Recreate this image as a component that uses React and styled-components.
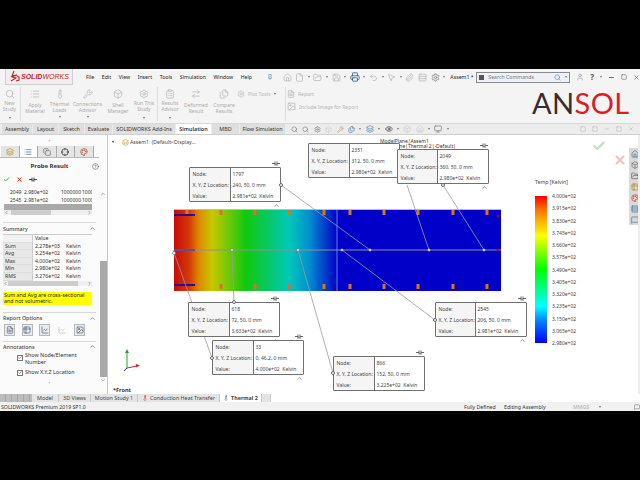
import React from 'react';
import styled, { createGlobalStyle } from 'styled-components';
import {
  Search, List, Thermometer, Wrench, Box, Settings, ClipboardList, ArrowRightLeft, Files, Image, FileText,
  Home, File, FolderOpen, Save, Printer, Undo2, MousePointer2, Paperclip, Rows3, User, Minus, Square, X,
  ChevronUp, ChevronDown, ChevronLeft, ChevronRight, Check, Pin, Eye, Monitor, HelpCircle, Crosshair, Table2, Palette,
  Layers, ChartLine, MessageSquare, Copy,
} from 'lucide-react';

const GlobalStyle = createGlobalStyle`
  html, body { margin: 0; padding: 0; background: #000; }
  * { box-sizing: border-box; }
`;

const Screen = styled.div`
  width: 640px;
  height: 480px;
  background: #000;
  padding: 69px 0;
  overflow: hidden;
  font-family: 'Noto Sans', sans-serif;
  color: #333;
`;

const Window = styled.div`
  display: flex;
  flex-direction: column;
  height: 342px;
  background: #fff;
`;

const TitleBar = styled.div`
  display: flex;
  align-items: center;
  height: 16px;
  background: #f4f4f4;
`;

const LogoBox = styled.div`
  display: flex;
  align-items: center;
  gap: 1px;
  width: 68px;
  height: 16px;
  margin-left: 5px;
  padding-left: 3px;
  background: #f0eeee;
  border: 1px solid #cfcfcf;
  border-top: 0;
  font-size: 7px;
  font-style: italic;
  color: #c8202a;
  white-space: nowrap;
`;

const Solid = styled.b`
  font-family: 'Liberation Sans', sans-serif;
  font-weight: 700;
`;

const Works = styled.span`
  font-family: 'Liberation Sans', sans-serif;
  font-weight: 400;
`;

const Menu = styled.div`
  display: flex;
  align-items: center;
  gap: 7.6px;
  margin-left: 13px;
  width: 197px;
  font-size: 5.2px;
  color: #222;
`;

const MenuPin = styled.span`
  display: flex;
  margin-left: 7px;
  color: #2a7a9a;
`;

const QuickBar = styled.div`
  display: flex;
  align-items: center;
  gap: 3.6px;
  width: 168px;
  color: #b5b5b5;
`;

const QuickIcon = styled.span`
  display: flex;
  color: ${(p) => p.$color || '#b8b8b8'};
`;

const Caret = styled.span`
  width: 0;
  height: 0;
  margin: 0 ${(p) => p.$gap ?? 0}px;
  border: 1.5px solid transparent;
  border-top: 2px solid ${(p) => p.$color || '#777'};
  border-bottom: 0;
`;

const DocName = styled.span`
  width: 26px;
  font-size: 5.2px;
  color: #222;
  white-space: nowrap;
`;

const SearchBox = styled.div`
  display: flex;
  align-items: center;
  gap: 4px;
  width: 94px;
  height: 11px;
  padding: 0 2px;
  background: #eef1f5;
  border: 1px solid #8b8b8b;
  font-size: 5.2px;
  color: #777;
`;

const SearchLabel = styled.span`
  flex: 1;
`;

const SearchGlyph = styled.span`
  width: 5px;
  height: 5px;
  background: #555;
`;

const WindowButtons = styled.div`
  display: flex;
  align-items: center;
  gap: 6px;
  margin-left: 6px;
  color: #555;
`;

const Help = styled.span`
  font-size: 8px;
  font-weight: 700;
  line-height: 1;
`;

const Ribbon = styled.div`
  display: flex;
  align-items: flex-start;
  height: 39px;
  background: #f4f4f4;
  border-bottom: 1px solid #d8d8d8;
`;

const RibbonItem = styled.div`
  display: flex;
  flex-direction: column;
  align-items: center;
  width: ${(p) => p.$w}px;
  padding-top: 4px;
  font-size: 5px;
  line-height: 6.4px;
  text-align: center;
  color: #ababab;
  white-space: pre-line;
`;

const RibbonGlyph = styled.span`
  display: flex;
  height: 11px;
  margin-bottom: ${(p) => p.$drop ?? 0}px;
  color: #bdbdbd;
`;

const RibbonCaret = styled(Caret)`
  margin-top: ${(p) => p.$lift}px;
`;

const RibbonSep = styled.span`
  align-self: stretch;
  width: 1px;
  margin: 2px 1px;
  background: #dcdcdc;
`;

const ReportColumn = styled.div`
  display: flex;
  flex-direction: column;
  gap: 4px;
  width: 72px;
  padding-top: 5px;
  font-size: 5px;
  color: #b4b4b4;
`;

const ReportRow = styled.div`
  display: flex;
  align-items: center;
  gap: 3px;
  white-space: nowrap;
`;

const PlotTools = styled(ReportRow)`
  width: 47px;
  padding: 5px 0 0 0;
  font-size: 5px;
  color: #b4b4b4;
`;

const Brand = styled.div`
  margin: 1px 0 0 173px;
  font-family: Lato, sans-serif;
  font-size: 29px;
  font-weight: 400;
  line-height: 33px;
  letter-spacing: 0.4px;
  color: #3a2b2e;
`;

const BrandRed = styled.span`
  color: #d81f26;
`;

const TabsBar = styled.div`
  display: flex;
  align-items: stretch;
  height: 11px;
  padding-left: 2px;
  background: #ececec;
  border-bottom: 1px solid #cfcfcf;
`;

const Tab = styled.div`
  display: flex;
  align-items: center;
  justify-content: center;
  width: ${(p) => p.$w}px;
  margin-right: 1px;
  background: ${(p) => (p.$active ? '#fff' : '#dfdfdf')};
  font-size: 5.4px;
  font-weight: ${(p) => (p.$active ? 600 : 400)};
  color: #333;
  white-space: nowrap;
`;

const ViewTools = styled.div`
  display: flex;
  align-items: center;
  gap: 4.4px;
  margin-left: 5px;
  width: 289px;
  color: #777;
`;

const ViewIcon = styled.span`
  display: flex;
  color: ${(p) => p.$color || '#8a8a8a'};
`;

const DocButtons = styled.div`
  display: flex;
  align-items: center;
  gap: 6px;
  color: #b5b5b5;
`;

const Main = styled.div`
  display: flex;
  height: 259px;
`;

const Panel = styled.div`
  display: flex;
  width: 108px;
  flex-shrink: 0;
  background: #fbfbfb;
  border-right: 1px solid #c8c8c8;
`;

const PanelBody = styled.div`
  width: 99px;
  display: flex;
  flex-direction: column;
`;

const Handle = styled.div`
  display: flex;
  align-items: center;
  justify-content: center;
  height: ${(p) => p.$h || 11}px;
  color: #bbb;
  font-size: 6px;
  line-height: 1;
`;

const PanelTabs = styled.div`
  display: flex;
  height: 12px;
  padding-left: 1px;
  border-bottom: 1px solid #bbb;
`;

const PanelTab = styled.div`
  display: flex;
  align-items: center;
  justify-content: center;
  width: 18.5px;
  background: ${(p) => (p.$active ? '#fff' : '#e4e4e4')};
  border-right: 1px solid #aaa;
`;

const PanelTitle = styled.div`
  display: flex;
  align-items: center;
  justify-content: center;
  position: relative;
  height: 16px;
  font-size: 6px;
  font-weight: 700;
  color: #333;
`;

const TitleHelp = styled.span`
  position: absolute;
  right: 0;
  display: flex;
  color: #666;
`;

const ActionRow = styled.div`
  display: flex;
  align-items: center;
  gap: 6px;
  height: 11px;
  padding-left: 3px;
`;

const ListBox = styled.div`
  margin: 4px 7px 0 4px;
  height: 26px;
  font-size: 5px;
  line-height: 7.5px;
  color: #333;
`;

const ListRow = styled.div`
  display: grid;
  grid-template-columns: 6px 51px 21px 1fr;
  white-space: nowrap;
  overflow: hidden;
`;

const ListSelected = styled.div`
  height: 6px;
  background: #a9a9a9;
`;

const HScroll = styled.div`
  display: flex;
  align-items: center;
  justify-content: space-between;
  height: 5px;
  background: #efefef;
  color: #444;
`;

const TableScroll = styled(HScroll)`
  margin: 0 7px 0 3px;
`;

const HThumb = styled.div`
  width: ${(p) => p.$w}px;
  height: 100%;
  margin-left: ${(p) => p.$left}px;
  margin-right: auto;
  background: #cdcdcd;
`;

const SectionHead = styled.div`
  display: flex;
  align-items: center;
  justify-content: space-between;
  height: ${(p) => p.$h || 12}px;
  margin: ${(p) => p.$top || 0}px 3px 0 3px;
  border-top: 1px solid #d8d8d8;
  font-size: 5.4px;
  font-weight: 500;
  color: #444;
`;

const DataTable = styled.div`
  margin: 0 7px 0 3px;
  display: grid;
  grid-template-columns: 30px 31px 1fr;
  grid-auto-rows: 7.6px;
  font-size: 5.2px;
  line-height: 7.6px;
  border-top: 1px solid #ccc;
`;

const HeadCell = styled.div`
  background: #f1f1f1;
  border-right: 1px solid #ccc;
  border-bottom: 1px solid #ddd;
  padding-left: 2px;
`;

const NameCell = styled(HeadCell)`
  background: #e8e8e8;
`;

const ValueCell = styled.div`
  padding-left: 2px;
  white-space: nowrap;
`;

const Note = styled.div`
  margin: 6px 7px 0 3px;
  height: 13px;
  padding-left: 1px;
  background: #ffff00;
  font-size: 5.3px;
  line-height: 6.2px;
  color: #222;
`;

const ReportButtons = styled.div`
  display: flex;
  gap: 6.5px;
  height: 17px;
  padding: 0 0 0 4px;
`;

const ReportButton = styled.div`
  display: flex;
  align-items: center;
  justify-content: center;
  width: 11px;
  height: 12px;
  background: ${(p) => (p.$off ? 'transparent' : '#e9edf2')};
  border: 1px solid ${(p) => (p.$off ? 'transparent' : '#b8b8b8')};
  color: ${(p) => (p.$off ? '#bbb' : '#4b5e70')};
`;

const CheckRow = styled.div`
  display: flex;
  gap: 2px;
  padding-left: 17px;
  margin-bottom: ${(p) => p.$gap || 0}px;
  font-size: 5.4px;
  line-height: 7px;
  color: #333;
`;

const CheckBox = styled.span`
  display: flex;
  align-items: center;
  justify-content: center;
  flex-shrink: 0;
  width: 6px;
  height: 6px;
  margin-top: ${(p) => p.$top || 0}px;
  background: #fff;
  border: 1px solid #777;
  color: #333;
`;

const PanelScroll = styled.div`
  display: flex;
  flex-direction: column;
  align-items: center;
  justify-content: flex-start;
  width: 8px;
  padding-top: 56px;
  color: #555;
`;

const ScrollThumb = styled.div`
  width: 7px;
  height: 116px;
  margin-top: 64px;
  background: #a8a8a8;
`;

const Canvas = styled.div`
  position: relative;
  flex: 1;
  background: #fff;
  border-right: 2px solid #eee;
  overflow: hidden;
`;

const TreeRow = styled.div`
  position: absolute;
  left: 4px;
  top: 3px;
  display: flex;
  align-items: center;
  gap: 1px;
  font-size: 5.2px;
  color: #444;
  white-space: nowrap;
`;

const TreeIcon = styled.span`
  display: flex;
  margin-left: 7px;
  color: #c79a20;
`;

const Plot = styled.div`
  position: absolute;
  left: 66px;
  top: 74px;
  width: 327px;
  height: 82px;
  border-top: 1px solid #9cc4e8;
  background: linear-gradient(
    90deg,
    #c80a0a 0,
    #d43a06 15px,
    #dc8a00 25px,
    #c8c800 38px,
    #10c810 72px,
    #00c8b8 115px,
    #0090d0 135px,
    #0000c8 163px
  );
`;

const Overlay = styled.svg`
  position: absolute;
  left: 0;
  top: 0;
  width: 530px;
  height: 259px;
`;

const Card = styled.div`
  position: absolute;
  left: ${(p) => p.$x - 108}px;
  top: ${(p) => p.$y - 135}px;
  display: grid;
  grid-template-columns: ${(p) => p.$split}px 1fr;
  width: 92px;
  height: 35px;
  background: #fff;
  border: 1px solid #707070;
  border-radius: 1px;
  font-size: 5px;
  color: #444;
`;

const CardLabels = styled.div`
  display: flex;
  flex-direction: column;
  justify-content: space-around;
  padding-left: 2.5px;
  background: #f5f5f5;
  border-right: 1px solid #707070;
  white-space: nowrap;
`;

const CardValues = styled.div`
  display: flex;
  flex-direction: column;
  justify-content: space-around;
  padding-left: 1.5px;
  white-space: nowrap;
`;

const CardPin = styled.span`
  position: absolute;
  right: 0;
  top: -7px;
  display: flex;
  color: #555;
`;

const CardCaret = styled.span`
  position: absolute;
  right: 0;
  bottom: -8px;
  display: flex;
  color: #555;
`;

const Dot = styled.span`
  position: absolute;
  left: ${(p) => p.$x}px;
  top: ${(p) => p.$y}px;
  width: 4px;
  height: 4px;
  background: #fff;
  border: 1px solid #666;
  border-radius: 50%;
`;

const PlaneLabel = styled.div`
  position: absolute;
  left: ${(p) => p.$x}px;
  top: ${(p) => p.$y}px;
  font-size: 5px;
  line-height: 5px;
  color: #333;
  white-space: nowrap;
`;

const Legend = styled.div`
  position: absolute;
  left: 427px;
  top: 43px;
`;

const LegendTitle = styled.div`
  height: 18px;
  font-size: 5.2px;
  color: #444;
`;

const LegendBody = styled.div`
  display: flex;
  gap: 5px;
`;

const LegendBar = styled.div`
  width: 12px;
  height: 147px;
  background: linear-gradient(180deg, #ff0000 0, #ff7700 10%, #ffff00 27%, #00ff00 50%, #00ffff 75%, #0080ff 85%, #0000ff 100%);
`;

const LegendTicks = styled.div`
  display: flex;
  flex-direction: column;
  justify-content: space-between;
  height: 154px;
  margin-top: -3px;
  font-size: 5px;
  line-height: 7px;
  color: #444;
`;

const OkMark = styled.span`
  position: absolute;
  right: ${(p) => p.$r}px;
  top: ${(p) => p.$t}px;
  display: flex;
  color: ${(p) => p.$color};
`;

const TaskPane = styled.div`
  position: absolute;
  right: -2px;
  top: 13px;
  display: flex;
  flex-direction: column;
  width: 11px;
  background: #d9d9d9;
`;

const TaskIcon = styled.span`
  display: flex;
  align-items: center;
  justify-content: center;
  height: 11px;
  color: ${(p) => p.$color || '#4d6a80'};
`;

const Front = styled.div`
  position: absolute;
  left: 5px;
  bottom: 0;
  font-size: 5.6px;
  font-weight: 700;
  color: #333;
`;

const BottomTabs = styled.div`
  display: flex;
  align-items: center;
  height: 8px;
  background: #e4e4e4;
  font-size: 5.4px;
  color: #444;
  white-space: nowrap;
`;

const NavButtons = styled.div`
  width: 32px;
  height: 100%;
  background: repeating-linear-gradient(90deg, #bcbcbc 0, #bcbcbc 5px, #a6a6a6 5px, #a6a6a6 6px);
`;

const BottomTab = styled.div`
  display: flex;
  align-items: center;
  justify-content: center;
  gap: 2px;
  width: ${(p) => p.$w}px;
  height: 100%;
  background: ${(p) => (p.$active ? '#fff' : 'transparent')};
  border-right: 1px solid #c8c8c8;
  font-weight: ${(p) => (p.$active ? 700 : 400)};
`;

const StatusFill = styled.div`
  flex: 1;
  height: 100%;
  margin-left: 8px;
  background: #fff;
  border-left: 1px solid #ccc;
`;

const StatusBar = styled.div`
  display: flex;
  align-items: center;
  height: 9px;
  padding-left: 1px;
  background: #f1f1f1;
  font-size: 5.2px;
  color: #333;
  white-space: nowrap;
`;

const StatusCell = styled.span`
  width: ${(p) => p.$w}px;
  color: ${(p) => p.$color || '#333'};
`;

const StatusIcon = styled.span`
  display: flex;
  margin-left: 33px;
  color: #666;
`;

const menuItems = ['File', 'Edit', 'View', 'Insert', 'Tools', 'Simulation', 'Window', 'Help'];

const ribbonItems = [
  { w: 19, icon: Search, label: 'New\nStudy', caret: 4 },
  { sep: true },
  { w: 26, icon: List, label: 'Apply\nMaterial', drop: 2 },
  { w: 23, icon: Thermometer, label: 'Thermal\nLoads', caret: 2, drop: 1 },
  { w: 33, icon: Wrench, label: 'Connections\nAdvisor', caret: 2, drop: 1 },
  { w: 28, icon: Box, label: 'Shell\nManager', drop: 2 },
  { w: 24, icon: Settings, label: 'Run This\nStudy', caret: 4 },
  { sep: true },
  { w: 22, icon: ClipboardList, label: 'Results\nAdvisor', caret: 4 },
  { w: 30, icon: ArrowRightLeft, label: 'Deformed\nResult', drop: 2 },
  { w: 26, icon: Files, label: 'Compare\nResults', drop: 2 },
];

const topTabs = [
  { w: 30, label: 'Assembly' },
  { w: 25, label: 'Layout' },
  { w: 25, label: 'Sketch' },
  { w: 27, label: 'Evaluate' },
  { w: 62, label: 'SOLIDWORKS Add-Ins' },
  { w: 35, label: 'Simulation', active: true },
  { w: 27, label: 'MBD' },
  { w: 45, label: 'Flow Simulation' },
];

const summary = [
  ['Sum', '2.278e+03'],
  ['Avg', '3.254e+02'],
  ['Max', '4.000e+02'],
  ['Min', '2.980e+02'],
  ['RMS', '3.276e+02'],
];

const probes = [
  { x: 308, y: 143, split: 41, node: '2351', loc: '312, 50, 0 mm', value: '2.980e+02', noCaret: true, noPin: true },
  { x: 189, y: 167, split: 41, node: '1797', loc: '240, 50, 0 mm', value: '2.981e+02' },
  { x: 397, y: 149, split: 40, node: '2049', loc: '360, 50, 0 mm', value: '2.980e+02' },
  { x: 188, y: 302, split: 41, node: '618', loc: '72, 50, 0 mm', value: '3.633e+02' },
  { x: 212, y: 340, split: 41, node: '33', loc: '0, 46.2, 0 mm', value: '4.000e+02' },
  { x: 333, y: 356, split: 41, node: '866', loc: '152, 50, 0 mm', value: '3.225e+02', noCaret: true },
  { x: 435, y: 302, split: 40, node: '2545', loc: '206, 50, 0 mm', value: '2.981e+02' },
];

// leader lines, in page coordinates (the svg viewBox starts at the canvas corner)
const leaders = [
  [281, 185, 370, 250],
  [407, 185, 429, 250],
  [443, 185, 484, 250],
  [435, 320, 342, 250],
  [333, 373, 298, 250],
  [234, 302, 232, 250],
  [212, 358, 173, 250],
];

const topMarks = [187, 221, 255, 289, 324, 350, 384, 418, 453, 487];
const bottomMarks = [221, 255, 289, 324, 350, 384, 418, 453, 487];

const legendTicks = [
  '4.000e+02', '3.915e+02', '3.830e+02', '3.745e+02', '3.660e+02', '3.575e+02', '3.490e+02',
  '3.405e+02', '3.320e+02', '3.235e+02', '3.150e+02', '3.065e+02', '2.980e+02',
];

const PinGlyph = () => (
  <svg width="8" height="5" viewBox="0 0 8 5">
    <path d="M0 2.5h3M3 .5v4M5 .5v4L3 2.5M5 2.5h3" fill="none" stroke="currentColor" strokeWidth="0.9" />
  </svg>
);

const ThreeDS = () => (
  <svg width="11" height="12" viewBox="0 0 11 12">
    <path d="M5 0 3 5l5-1-5 2 4 1-5 3M8 5l2 1v3l-3 1" fill="none" stroke="#c8202a" strokeWidth="1.1" />
  </svg>
);

const Triad = () => (
  <svg x="122" y="348" width="20" height="24" viewBox="0 0 20 24">
    <path d="M5 20V3" stroke="#2aa02a" strokeWidth="1" />
    <path d="M5 20l10-2" stroke="#c82828" strokeWidth="1" />
    <path d="M5 20l-3 3" stroke="#2a2ac8" strokeWidth="1" />
    <path d="M3 5l2-4 2 4z" fill="#2aa02a" />
    <path d="M14 16l4 1.500-4 2z" fill="#c82828" />
  </svg>
);

const Probe = ({ probe }) => (
  <Card $x={probe.x} $y={probe.y} $split={probe.split}>
    <CardLabels>
      <span>Node:</span>
      <span>X, Y, Z Location:</span>
      <span>Value:</span>
    </CardLabels>
    <CardValues>
      <span>{probe.node}</span>
      <span>{probe.loc}</span>
      <span>{probe.value}&nbsp; Kelvin</span>
    </CardValues>
    {!probe.noPin && (
      <CardPin>
        <PinGlyph />
      </CardPin>
    )}
    {!probe.noCaret && (
      <CardCaret>
        <ChevronUp size={7} />
      </CardCaret>
    )}
  </Card>
);

const ResultCanvas = () => (
  <Canvas>
    <TreeRow>
      <Caret $color="#333" />
      <TreeIcon><Layers size={7} /></TreeIcon>
      <span>Assem1 &nbsp;(Default&lt;Display...</span>
    </TreeRow>
    <Plot />
    <Overlay viewBox="108 135 530 259">
      {topMarks.map((x) => (
        <rect key={x} x={x - 1.5} y={210} width={3} height={5} fill="#d8742a" />
      ))}
      {bottomMarks.map((x) => (
        <rect key={x} x={x - 1.5} y={284} width={3} height={5} fill="#d8742a" />
      ))}
      <rect x={174} y={214} width={21} height={2} fill="#2c0a96" />
      <rect x={174} y={249} width={21} height={2} fill="#2c0a96" />
      <rect x={174} y={284} width={21} height={2} fill="#2c0a96" />
      <line x1={174} y1={250} x2={501} y2={250} stroke="#8f9098" strokeWidth="1" />
      <line x1={337} y1={210} x2={337} y2={291} stroke="#6fa8f0" strokeWidth="0.8" />
      <circle cx={498} cy={216} r={1.5} fill="#8a1030" />
      <circle cx={498} cy={250} r={1.5} fill="#8a1030" />
      {leaders.map(([x1, y1, x2, y2]) => (
        <line key={`${x1}-${y1}`} x1={x1} y1={y1} x2={x2} y2={y2} stroke="#9a9aa4" strokeWidth="0.8" />
      ))}
      {[232, 298, 342, 370, 429, 484].map((x) => (
        <circle key={x} cx={x} cy={250} r={1.3} fill="#fff" stroke="#666" strokeWidth="0.5" />
      ))}
      <circle cx={174} cy={253} r={1.5} fill="#fff" stroke="#666" strokeWidth="0.6" />
      <Triad />
    </Overlay>
    <PlaneLabel $x={272} $y={3.5}>ModelPlane|Assem1</PlaneLabel>
    <PlaneLabel $x={290} $y={9}>ine|Thermal 2|-Default|</PlaneLabel>
    {probes.map((probe) => (
      <Probe key={probe.node} probe={probe} />
    ))}
    <Dot $x={171} $y={48} />
    <Dot $x={333} $y={48} />
    <Dot $x={124} $y={165} />
    <Dot $x={102} $y={221} />
    <Dot $x={223} $y={236} />
    <Dot $x={325} $y={183} />
    <Legend>
      <LegendTitle>Temp [Kelvin]</LegendTitle>
      <LegendBody>
        <LegendBar />
        <LegendTicks>
          {legendTicks.map((t) => (
            <span key={t}>{t}</span>
          ))}
        </LegendTicks>
      </LegendBody>
    </Legend>
    <OkMark $r={32} $t={4} $color="#c6e0c8">
      <Check size={14} strokeWidth={4} />
    </OkMark>
    <OkMark $r={11} $t={18} $color="#eec4c4">
      <X size={14} strokeWidth={4} />
    </OkMark>
    <TaskPane>
      <TaskIcon><Home size={8} /></TaskIcon>
      <TaskIcon $color="#666"><Box size={8} /></TaskIcon>
      <TaskIcon $color="#555"><FolderOpen size={8} /></TaskIcon>
      <TaskIcon $color="#b08a20"><Table2 size={8} /></TaskIcon>
      <TaskIcon $color="#c83a20"><Palette size={8} /></TaskIcon>
      <TaskIcon $color="#2a6a9a"><Rows3 size={8} /></TaskIcon>
      <TaskIcon><MessageSquare size={8} /></TaskIcon>
    </TaskPane>
    <Front>*Front</Front>
  </Canvas>
);

const ProbePanel = () => (
  <Panel>
    <PanelBody>
      <Handle>•</Handle>
      <PanelTabs>
        <PanelTab><Layers size={8} color="#b89020" /></PanelTab>
        <PanelTab $active><List size={8} color="#3a5a7a" /></PanelTab>
        <PanelTab><Copy size={8} color="#666" /></PanelTab>
        <PanelTab><Crosshair size={8} color="#222" /></PanelTab>
        <PanelTab><Palette size={8} color="#b84020" /></PanelTab>
      </PanelTabs>
      <PanelTitle>
        Probe Result
        <TitleHelp><HelpCircle size={7} /></TitleHelp>
      </PanelTitle>
      <ActionRow>
        <Check size={7} strokeWidth={3} color="#2a9a2a" />
        <X size={7} strokeWidth={3} color="#c82020" />
        <PinGlyph />
      </ActionRow>
      <ListBox>
        <ListRow><span /><span>2049&nbsp; 2.980e+02</span><span>1000000</span><span>1000</span></ListRow>
        <ListRow><span /><span>2545&nbsp; 2.981e+02</span><span>1000000</span><span>1000</span></ListRow>
        <ListSelected />
        <HScroll>
          <ChevronLeft size={5} />
          <HThumb $left={2} $w={40} />
          <ChevronRight size={5} />
        </HScroll>
      </ListBox>
      <SectionHead $top={7}>
        Summary
        <ChevronUp size={7} />
      </SectionHead>
      <DataTable>
        <HeadCell />
        <ValueCell>Value</ValueCell>
        <span />
        {summary.map(([name, value]) => (
          <React.Fragment key={name}>
            <NameCell>{name}</NameCell>
            <ValueCell>{value}</ValueCell>
            <ValueCell>Kelvin</ValueCell>
          </React.Fragment>
        ))}
      </DataTable>
      <TableScroll>
        <ChevronLeft size={5} />
        <HThumb $left={0} $w={70} />
        <ChevronRight size={5} />
      </TableScroll>
      <Note>Sum and Avg are cross-sectional and not volumetric.</Note>
      <SectionHead $top={7}>
        Report Options
        <ChevronUp size={7} />
      </SectionHead>
      <ReportButtons>
        <ReportButton><FileText size={8} /></ReportButton>
        <ReportButton><Table2 size={8} /></ReportButton>
        <ReportButton><ChartLine size={8} /></ReportButton>
        <ReportButton $off><ChartLine size={8} /></ReportButton>
        <ReportButton><Image size={8} /></ReportButton>
      </ReportButtons>
      <SectionHead $h={11}>
        Annotations
        <ChevronUp size={7} />
      </SectionHead>
      <CheckRow $gap={3}>
        <CheckBox $top={3}><Check size={5} strokeWidth={3} /></CheckBox>
        <span>Show Node/Element<br />Number</span>
      </CheckRow>
      <CheckRow>
        <CheckBox $top={1}><Check size={5} strokeWidth={3} /></CheckBox>
        <span>Show X,Y,Z Location</span>
      </CheckRow>
      <Handle $h={14}>•</Handle>
    </PanelBody>
    <PanelScroll>
      <ChevronUp size={6} />
      <ScrollThumb />
      <ChevronDown size={6} />
    </PanelScroll>
  </Panel>
);

export default function App() {
  return (
    <Screen>
      <GlobalStyle />
      <Window>
        <TitleBar>
          <LogoBox>
            <ThreeDS />
            <span><Solid>SOLID</Solid><Works>WORKS</Works></span>
          </LogoBox>
          <Menu>
            {menuItems.map((m) => (
              <span key={m}>{m}</span>
            ))}
            <MenuPin><Pin size={6} /></MenuPin>
          </Menu>
          <QuickBar>
            <QuickIcon><Home size={9} /></QuickIcon>
            <QuickIcon><File size={9} /></QuickIcon>
            <Caret />
            <QuickIcon><FolderOpen size={9} /></QuickIcon>
            <Caret />
            <QuickIcon><Save size={9} /></QuickIcon>
            <Caret />
            <QuickIcon $color="#2f5f8a"><Printer size={10} /></QuickIcon>
            <Caret />
            <QuickIcon><Undo2 size={9} /></QuickIcon>
            <Caret />
            <QuickIcon><MousePointer2 size={9} /></QuickIcon>
            <Caret />
            <QuickIcon><Paperclip size={9} /></QuickIcon>
            <QuickIcon><Rows3 size={9} /></QuickIcon>
            <QuickIcon $color="#777"><Settings size={9} /></QuickIcon>
            <Caret />
          </QuickBar>
          <DocName>Assem1 *</DocName>
          <SearchBox>
            <SearchGlyph />
            <SearchLabel>Search Commands</SearchLabel>
            <Search size={7} color="#5a86b8" />
            <Caret />
          </SearchBox>
          <WindowButtons>
            <User size={8} color="#999" />
            <Help>?</Help>
            <Caret />
            <Minus size={7} strokeWidth={3} />
            <Square size={6} />
            <X size={7} />
          </WindowButtons>
        </TitleBar>
        <Ribbon>
          {ribbonItems.map((item, i) =>
            item.sep ? (
              <RibbonSep key={i} />
            ) : (
              <RibbonItem key={item.label} $w={item.w}>
                <RibbonGlyph $drop={item.drop}>
                  <item.icon size={10} />
                </RibbonGlyph>
                {item.label}
                {item.caret && <RibbonCaret $lift={item.caret} />}
              </RibbonItem>
            )
          )}
          <PlotTools>
            <Settings size={8} color="#bbb" />
            Plot Tools
            <Caret />
          </PlotTools>
          <RibbonSep />
          <ReportColumn>
            <ReportRow><FileText size={8} />Report</ReportRow>
            <ReportRow><Image size={9} />Include Image for Report</ReportRow>
          </ReportColumn>
          <Brand>AN<BrandRed>SOL</BrandRed></Brand>
        </Ribbon>
        <TabsBar>
          {topTabs.map((t) => (
            <Tab key={t.label} $w={t.w} $active={t.active}>{t.label}</Tab>
          ))}
          <ViewTools>
            <Search size={7} />
            <Search size={7} />
            <Settings size={7} />
            <ViewIcon $color="#ccc"><Box size={7} /></ViewIcon>
            <ViewIcon $color="#c8a050"><Wrench size={7} /></ViewIcon>
            <ViewIcon $color="#4a7aa0"><Files size={7} /></ViewIcon>
            <Caret />
            <ViewIcon $color="#4a8aa8"><Layers size={8} /></ViewIcon>
            <Caret />
            <ViewIcon $color="#333"><Eye size={8} /></ViewIcon>
            <Caret />
            <ViewIcon $color="#ccc"><Box size={8} /></ViewIcon>
            <ViewIcon $color="#ccc"><Home size={8} /></ViewIcon>
            <Caret />
            <ViewIcon $color="#777"><Monitor size={8} /></ViewIcon>
            <Caret />
          </ViewTools>
          <DocButtons>
            <Square size={6} />
            <Square size={6} />
            <Minus size={6} />
            <Square size={6} />
            <X size={6} />
          </DocButtons>
        </TabsBar>
        <Main>
          <ProbePanel />
          <ResultCanvas />
        </Main>
        <BottomTabs>
          <NavButtons />
          <BottomTab $w={27}>Model</BottomTab>
          <BottomTab $w={32}>3D Views</BottomTab>
          <BottomTab $w={47}>Motion Study 1</BottomTab>
          <BottomTab $w={82}><Thermometer size={6} color="#c83030" />Conduction Heat Transfer</BottomTab>
          <BottomTab $w={42} $active><Thermometer size={6} color="#2a6a9a" />Thermal 2</BottomTab>
          <StatusFill />
        </BottomTabs>
        <StatusBar>
          <StatusCell $w={463}>SOLIDWORKS Premium 2019 SP1.0</StatusCell>
          <StatusCell $w={40}>Fully Defined</StatusCell>
          <StatusCell $w={69}>Editing Assembly</StatusCell>
          <StatusCell $w={26} $color="#aaa">MMGS</StatusCell>
          <Caret />
          <StatusIcon><MessageSquare size={6} /></StatusIcon>
        </StatusBar>
      </Window>
    </Screen>
  );
}
